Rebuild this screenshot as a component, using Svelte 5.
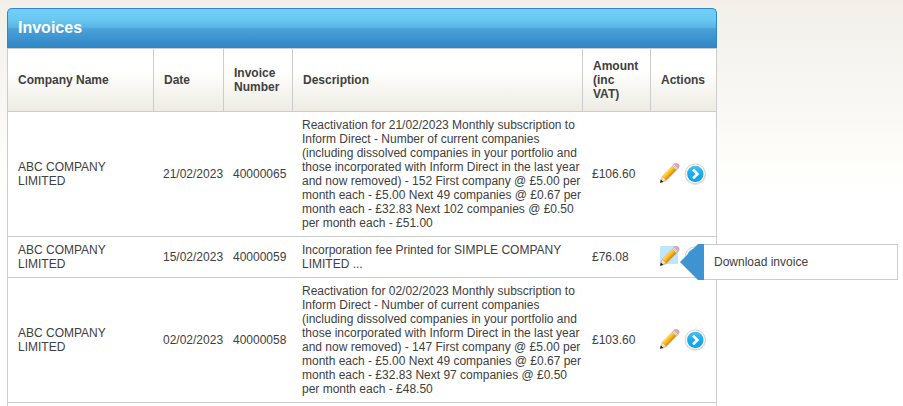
<script>
  const invoices = [
    {
      company: 'ABC COMPANY LIMITED',
      date: '21/02/2023',
      number: '40000065',
      description:
        'Reactivation for 21/02/2023 Monthly subscription to Inform Direct - Number of current companies (including dissolved companies in your portfolio and those incorporated with Inform Direct in the last year and now removed) - 152 First company @ £5.00 per month each - £5.00 Next 49 companies @ £0.67 per month each - £32.83 Next 102 companies @ £0.50 per month each - £51.00',
      amount: '£106.60',
    },
    {
      company: 'ABC COMPANY LIMITED',
      date: '15/02/2023',
      number: '40000059',
      description: 'Incorporation fee Printed for SIMPLE COMPANY LIMITED ...',
      amount: '£76.08',
    },
    {
      company: 'ABC COMPANY LIMITED',
      date: '02/02/2023',
      number: '40000058',
      description:
        'Reactivation for 02/02/2023 Monthly subscription to Inform Direct - Number of current companies (including dissolved companies in your portfolio and those incorporated with Inform Direct in the last year and now removed) - 147 First company @ £5.00 per month each - £5.00 Next 49 companies @ £0.67 per month each - £32.83 Next 97 companies @ £0.50 per month each - £48.50',
      amount: '£103.60',
    },
  ];

  let active = $state('40000059');
</script>

<svg class="defs" width="0" height="0" aria-hidden="true">
  <defs>
    <linearGradient id="disc" x1="0" y1="0" x2="0" y2="1">
      <stop offset="0" stop-color="#4cc0f0" />
      <stop offset="0.5" stop-color="#1eaaea" />
      <stop offset="1" stop-color="#08a4ee" />
    </linearGradient>
    <linearGradient id="wood" gradientUnits="userSpaceOnUse" x1="7.3" y1="8.3" x2="11.2" y2="12">
      <stop offset="0" stop-color="#ffd95a" />
      <stop offset="0.4" stop-color="#fdc01c" />
      <stop offset="0.7" stop-color="#f7a400" />
      <stop offset="1" stop-color="#c67c00" />
    </linearGradient>
  </defs>
</svg>

<main>
  <section aria-labelledby="title">
    <h2 id="title">Invoices</h2>
    <div class="body">
      <table>
        <colgroup>
          <col class="company" />
          <col class="date" />
          <col class="number" />
          <col />
          <col class="amount" />
          <col class="actions" />
        </colgroup>
        <thead>
          <tr>
            <th scope="col">Company Name</th>
            <th scope="col">Date</th>
            <th scope="col">Invoice Number</th>
            <th scope="col">Description</th>
            <th scope="col">Amount (inc VAT)</th>
            <th scope="col">Actions</th>
          </tr>
        </thead>
        <tbody>
          {#each invoices as invoice (invoice.number)}
            <tr>
              <td>{invoice.company}</td>
              <td>{invoice.date}</td>
              <td>{invoice.number}</td>
              <td>{invoice.description}</td>
              <td>{invoice.amount}</td>
              <td>
                <div class="icons">
                  <button
                    type="button"
                    class="edit"
                    class:active={active === invoice.number}
                    aria-label="Edit invoice {invoice.number}"
                    onmouseenter={() => (active = invoice.number)}
                  >
                    <svg width="20" height="20" viewBox="0 0 20 20" aria-hidden="true">
                      <path d="M1 20 L6.4 18.4 L19.4 5 L17.5 4.5 Z" fill="#8a8a8a" opacity="0.3" />
                      <path d="M0.2 19.4 L2.2 13.2 L6.2 17 Z" fill="#f8e2b8" stroke="#a88850" stroke-width="0.4" />
                      <path d="M2.2 13.2 L12.2 3 L16.3 6.8 L6.2 17 Z" fill="url(#wood)" stroke="#d09a20" stroke-width="0.3" />
                      <path d="M12.2 3 L14.2 1 L18.2 4.9 L16.3 6.8 Z" fill="#e3e6ea" stroke="#9a9ea5" stroke-width="0.4" />
                      <path d="M13.2 2 L17.2 5.9" stroke="#9a9ea5" stroke-width="0.5" />
                      <path d="M14.2 1 Q15.3 0 16.7 0.2 Q19 0.8 19.3 3 Q19.3 4.1 18.2 4.9 Z" fill="#f0a0a8" stroke="#c87b85" stroke-width="0.4" />
                      <path d="M0 19.8 L0.9 16.6 L3.4 18.9 Z" fill="#1c1c1c" />
                    </svg>
                  </button>
                  <button type="button" class="go" aria-label="Open invoice {invoice.number}">
                    <svg width="22" height="22" viewBox="0 0 22 22" aria-hidden="true">
                      <circle cx="11.3" cy="11.2" r="10.7" fill="#e4e4e4" />
                      <circle cx="11.3" cy="10.8" r="9.9" fill="#fff" stroke="#d2d2d2" stroke-width="0.9" />
                      <circle cx="11.3" cy="10.9" r="8.2" fill="url(#disc)" />
                      <path d="M9 6.6 L13.4 11 L9 15.4" fill="none" stroke="#fff" stroke-width="2.7" />
                    </svg>
                  </button>
                  {#if active === invoice.number}
                    <div class="tip" role="tooltip">
                      <span class="arrow"></span>
                      <span class="label">Download invoice</span>
                    </div>
                  {/if}
                </div>
              </td>
            </tr>
          {/each}
        </tbody>
      </table>
    </div>
  </section>
</main>

<style>
  :global(body) {
    margin: 0;
    background: #fff linear-gradient(#f3efe8, #f3f2ed 30px, #f9f8f4 110px, #fefefb 170px, #fff 200px) no-repeat;
  }

  .defs {
    position: absolute;
  }

  main {
    box-sizing: border-box;
    display: flex;
    flex-direction: column;
    min-height: 100vh;
    padding: 8px 7px 0;
    font: 12px/14px 'Liberation Sans', Arial, sans-serif;
    color: #404040;
  }

  section {
    display: flex;
    flex: 1;
    flex-direction: column;
    width: 100%;
    max-width: 710px;
  }

  h2 {
    box-sizing: border-box;
    margin: 0;
    padding: 0 10px 2px;
    border: 1px solid #2f87c6;
    border-bottom: 0;
    border-radius: 5px 5px 0 0;
    background: linear-gradient(#6fcff8, #6bcaf2 25%, #56b2e2 50%, #4ba3da 50%, #2f84c4);
    color: #fff;
    font-size: 16px;
    line-height: 37px;
  }

  .body {
    flex: 1;
    border: 1px solid #ccc;
    border-bottom: 0;
    background: #fff;
  }

  table {
    width: 100%;
    table-layout: fixed;
    border-spacing: 0;
  }

  .company {
    width: 145px;
  }

  .date {
    width: 70px;
  }

  .number {
    width: 69px;
  }

  .amount {
    width: 68px;
  }

  .actions {
    width: 66px;
  }

  th {
    padding: 10px;
    border-bottom: 1px solid #ccc;
    border-left: 1px solid #ccc;
    background: linear-gradient(#fff 35%, #eeebe3);
    text-align: left;
  }

  th:first-child {
    border-left: 0;
  }

  td {
    padding: 6px 0 6px 10px;
    border-bottom: 1px solid #ccc;
  }

  .icons {
    position: relative;
    display: flex;
    align-items: flex-start;
    gap: 4px;
  }

  button {
    padding: 0;
    border: 0;
    background: none;
    cursor: pointer;
  }

  button svg {
    display: block;
  }

  .edit.active {
    background: linear-gradient(#bfe6fd, #bfe6fd) 0 0 / 18px 18px no-repeat;
    border-radius: 2px;
  }

  .tip {
    position: absolute;
    top: -2px;
    left: 20px;
    display: flex;
    width: 218px;
    height: 36px;
  }

  .arrow {
    width: 24px;
    background: #3d94d0;
    clip-path: polygon(0 50%, 18px 0, 100% 0, 100% 100%, 18px 100%);
  }

  .label {
    flex: 1;
    padding: 0 10px;
    border: 1px solid #ccc;
    border-left: 0;
    background: #fff;
    line-height: 34px;
  }
</style>
